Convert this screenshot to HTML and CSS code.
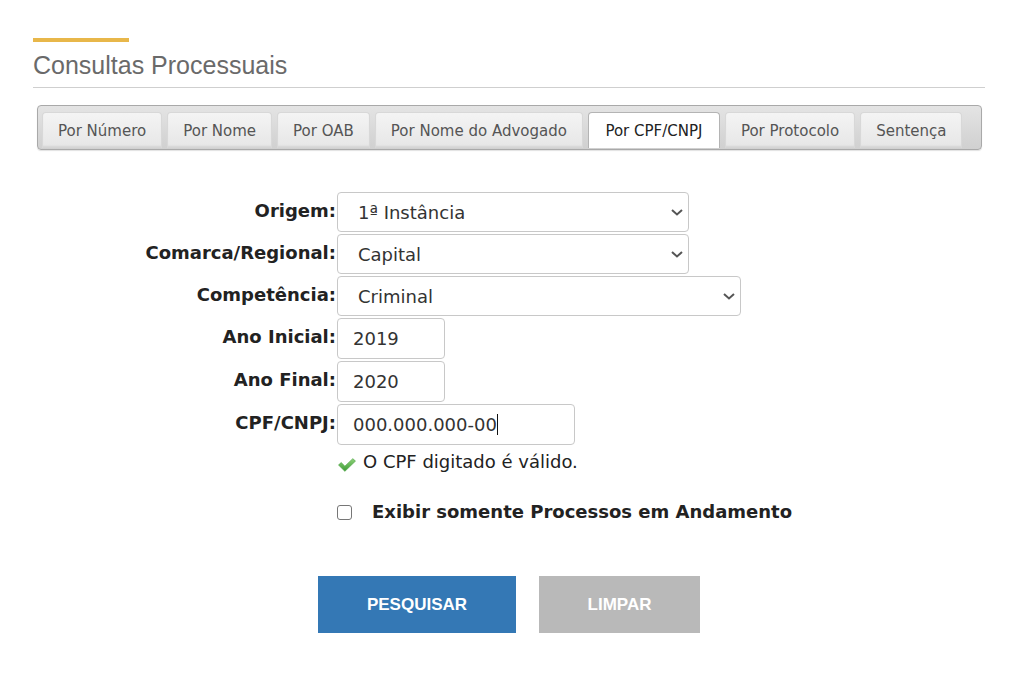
FILE: index.html
```html
<!DOCTYPE html>
<html lang="pt-BR">
<head>
<meta charset="utf-8">
<title>Consultas Processuais</title>
<link rel="stylesheet" href="styles.css">
</head>
<body>
<div class="page">
  <div class="header">
    <div class="accent"></div>
    <h1 class="title">Consultas Processuais</h1>
  </div>

  <div class="tabbar">
    <a class="tab">Por Número</a>
    <a class="tab">Por Nome</a>
    <a class="tab">Por OAB</a>
    <a class="tab">Por Nome do Advogado</a>
    <a class="tab active">Por CPF/CNPJ</a>
    <a class="tab">Por Protocolo</a>
    <a class="tab">Sentença</a>
  </div>

  <form class="form">
    <label class="lbl">Origem:</label>
    <div class="selwrap sel-md">
      <select class="field"><option>1ª Instância</option></select>
      <svg class="chev" width="12" height="7" viewBox="0 0 12 7"><path d="M1 1 L6 5.5 L11 1" fill="none" stroke="#555" stroke-width="2"/></svg>
    </div>

    <label class="lbl">Comarca/Regional:</label>
    <div class="selwrap sel-md">
      <select class="field"><option>Capital</option></select>
      <svg class="chev" width="12" height="7" viewBox="0 0 12 7"><path d="M1 1 L6 5.5 L11 1" fill="none" stroke="#555" stroke-width="2"/></svg>
    </div>

    <label class="lbl">Competência:</label>
    <div class="selwrap sel-lg">
      <select class="field"><option>Criminal</option></select>
      <svg class="chev" width="12" height="7" viewBox="0 0 12 7"><path d="M1 1 L6 5.5 L11 1" fill="none" stroke="#555" stroke-width="2"/></svg>
    </div>

    <label class="lbl">Ano Inicial:</label>
    <input class="field inp-sm" type="text" value="2019">

    <label class="lbl">Ano Final:</label>
    <input class="field inp-sm" type="text" value="2020">

    <label class="lbl">CPF/CNPJ:</label>
    <div class="cpfcell">
      <div class="field inp-md"><span>000.000.000-00</span><span class="caret"></span></div>
      <div class="valid">
        <svg class="check" width="18" height="14" viewBox="0 0 17 13">
          <defs>
            <linearGradient id="gck" x1="0" y1="0" x2="0" y2="1">
              <stop offset="0" stop-color="#8fd27a"/>
              <stop offset="1" stop-color="#3b9a34"/>
            </linearGradient>
          </defs>
          <path d="M0.5 6.5 L3 4.2 L6.5 7.6 L14 0.5 L16.5 2.8 L6.5 12.5 Z" fill="url(#gck)" stroke="#46a03c" stroke-width="0.6" stroke-linejoin="round"/>
        </svg>
        <span>O CPF digitado é válido.</span>
      </div>
    </div>

    <div class="spacer"></div>
    <label class="chkrow"><span class="chkbox"></span><span class="chklbl">Exibir somente Processos em Andamento</span></label>
  </form>

  <div class="actions">
    <button class="btn primary" type="button">PESQUISAR</button>
    <button class="btn secondary" type="button">LIMPAR</button>
  </div>
</div>
</body>
</html>
```

FILE: styles.css
```css
* { box-sizing: border-box; }
html, body { margin: 0; padding: 0; background: #fff; }
body {
  font-family: "DejaVu Sans", Verdana, sans-serif;
  color: #222;
}
.page {
  width: 952px;
  margin-left: 33px;
  padding-top: 38px;
}
.header {
  border-bottom: 1px solid #cfcfcf;
  padding-bottom: 7px;
}
.accent {
  width: 96px;
  height: 4px;
  background: #e8b74a;
}
.title {
  margin: 8px 0 0 0;
  font-family: "Liberation Sans", Arial, sans-serif;
  font-weight: normal;
  font-size: 25px;
  line-height: 30px;
  color: #6a6a6a;
}
.tabbar {
  margin: 17px 3px 0 4px;
  height: 45px;
  border: 1px solid #a9a9a9;
  border-radius: 4px;
  background: linear-gradient(#e4e4e4, #d0d0d0);
  box-shadow: 0 1px 1px rgba(0,0,0,0.12);
  padding: 6px 0 0 4px;
  display: flex;
  gap: 5px;
}
.tab {
  height: 36px;
  padding: 0 15px;
  display: flex;
  align-items: center;
  font-size: 15px;
  color: #555;
  border: 1px solid #d8d8d8;
  border-bottom: none;
  border-radius: 4px 4px 0 0;
  background: linear-gradient(#f4f4f4, #e6e6e6);
  box-shadow: inset 0 -3px 2px -1px #d4d4d4;
}
.tab.active {
  padding: 0 16.5px;
  background: #fff;
  color: #222;
  border-color: #b4b4b4;
  box-shadow: none;
}
.form {
  margin-top: 42px;
  display: grid;
  grid-template-columns: 303px 1fr;
  column-gap: 1px;
  row-gap: 2px;
  align-items: start;
}
.lbl {
  text-align: right;
  font-weight: bold;
  font-size: 18px;
  line-height: 21px;
  padding-top: 8px;
  color: #222;
}
.field {
  height: 41px;
  border: 1px solid #c8c8c8;
  border-radius: 4px;
  background: #fff;
  font-family: "DejaVu Sans", Verdana, sans-serif;
  font-size: 18px;
  color: #333;
  margin: 0;
}
.selwrap {
  position: relative;
  height: 40px;
}
.selwrap select.field {
  -webkit-appearance: none;
  appearance: none;
  width: 100%;
  height: 40px;
  padding: 0 30px 0 20px;
}
.chev {
  position: absolute;
  right: 6px;
  top: 17px;
  pointer-events: none;
}
.sel-md { width: 352px; }
.sel-lg { width: 404px; }
input.field {
  padding: 0 15px;
}
.inp-sm { width: 108px; }
.inp-md {
  width: 238px;
  display: flex;
  align-items: center;
  padding: 0 15px;
}
.caret {
  display: inline-block;
  width: 1px;
  height: 21px;
  background: #111;
}
.cpfcell { display: flex; flex-direction: column; }
.valid {
  display: flex;
  align-items: center;
  gap: 7px;
  margin-top: 6px;
  font-size: 18px;
  line-height: 22px;
  color: #222;
}
.check { margin-top: 5px; margin-left: 1px; }
.spacer { height: 1px; }
.chkrow {
  display: flex;
  align-items: center;
  margin-top: 26px;
}
.chkbox {
  width: 15px;
  height: 15px;
  border: 1px solid #767676;
  border-radius: 3px;
  background: #fff;
  margin-right: 20px;
}
.chklbl {
  font-weight: bold;
  font-size: 18px;
  line-height: 22px;
  color: #222;
}
.actions {
  margin-top: 53px;
  display: flex;
  justify-content: center;
  gap: 23px;
}
.btn {
  height: 57px;
  border: none;
  border-radius: 0;
  font-family: "Liberation Sans", Arial, sans-serif;
  font-weight: bold;
  font-size: 17px;
  color: #fff;
}
.btn.primary { width: 198px; background: #3478b5; }
.btn.secondary { width: 161px; background: #b9b9b9; }
```
